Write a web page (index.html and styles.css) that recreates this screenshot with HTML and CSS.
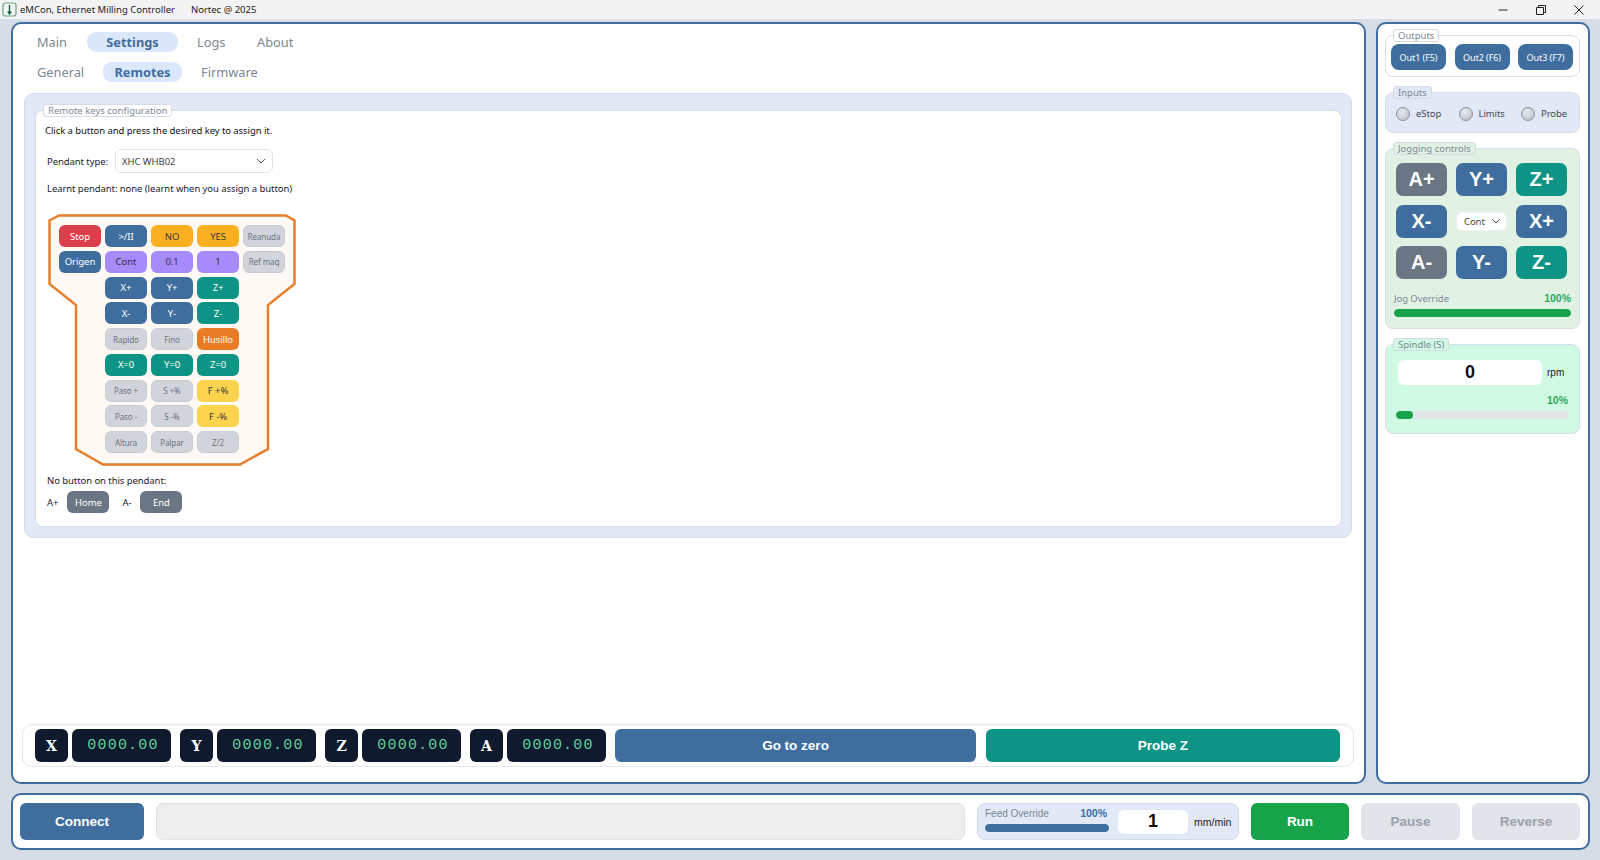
FILE: index.html
```html
<!DOCTYPE html>
<html lang="en">
<head>
  <meta charset="UTF-8" />
  <title>eMCon, Ethernet Milling Controller</title>
  <link rel="stylesheet" href="styles.css">
</head>
<body>
  <div class="titlebar">
    <svg class="app-icon" width="15" height="15" viewBox="0 0 15 15">
      <rect x="1" y="1" width="13" height="13" rx="2.5" fill="#f2f7f2" stroke="#6aa57c" stroke-width="1.2"/>
      <path d="M7.5 3v9M5.8 9.500l1.700 2.500 1.700-2.500" fill="none" stroke="#1f5f4a" stroke-width="1.4"/>
    </svg>
    <span class="app-name">eMCon, Ethernet Milling Controller</span>
    <span class="app-copy">Nortec @ 2025</span>
    <div class="win-controls">
      <svg width="12" height="12" viewBox="0 0 12 12"><path d="M1.500 6h9" stroke="#222" fill="none"/></svg>
      <svg width="12" height="12" viewBox="0 0 12 12"><path d="M3.500 3V1.500h7v7H9M1.500 3.500h7v7h-7z" stroke="#222" fill="none"/></svg>
      <svg width="12" height="12" viewBox="0 0 12 12"><path d="M1.500 1.500l9 9M10.500 1.500l-9 9" stroke="#222" fill="none"/></svg>
    </div>
  </div>

  <div class="workspace">
    <div class="main-panel">
      <div class="tabs tabs-top">
        <span class="tab tab-main">Main</span>
        <span class="tab tab-active tab-settings">Settings</span>
        <span class="tab tab-logs">Logs</span>
        <span class="tab">About</span>
      </div>
      <div class="tabs tabs-sub">
        <span class="tab tab-general">General</span>
        <span class="tab tab-active tab-remotes">Remotes</span>
        <span class="tab">Firmware</span>
      </div>

      <div class="settings-panel">
        <div class="group group-white remote-group">
          <div class="legend">Remote keys configuration</div>
          <div class="hint">Click a button and press the desired key to assign it.</div>
          <div class="pendant-type">
            <span>Pendant type:</span>
            <div class="select select-wide">
              <span>XHC WHB02</span>
              <svg width="10" height="6" viewBox="0 0 10 6"><path d="M1 1l4 4 4-4" fill="none" stroke="#555" stroke-width="1"/></svg>
            </div>
          </div>
          <div class="learnt">Learnt pendant: none (learnt when you assign a button)</div>

          <div class="pendant">
            <svg class="pendant-shape" width="248" height="252" viewBox="0 0 248 252">
              <path d="M1.500 6.500L11 1.500H238L246.500 6.500V70L220 91V235L192 250.500H55L28 235V91L1.500 70Z" fill="#fff9f5" stroke="#e67e2a" stroke-width="2.500"/>
            </svg>
            <div class="pad">
              <button class="key red">Stop</button>
              <button class="key blue">&gt;/II</button>
              <button class="key amber">NO</button>
              <button class="key amber">YES</button>
              <button class="key off">Reanuda</button>
              <button class="key blue">Origen</button>
              <button class="key purple">Cont</button>
              <button class="key purple">0.1</button>
              <button class="key purple">1</button>
              <button class="key off">Ref maq</button>
              <button class="key blue skip">X+</button>
              <button class="key blue">Y+</button>
              <button class="key teal">Z+</button>
              <button class="key blue skip">X-</button>
              <button class="key blue">Y-</button>
              <button class="key teal">Z-</button>
              <button class="key off skip">Rapido</button>
              <button class="key off">Fino</button>
              <button class="key orange">Husillo</button>
              <button class="key teal skip">X=0</button>
              <button class="key teal">Y=0</button>
              <button class="key teal">Z=0</button>
              <button class="key off skip">Paso +</button>
              <button class="key off">S +%</button>
              <button class="key yellow">F +%</button>
              <button class="key off skip">Paso -</button>
              <button class="key off">S -%</button>
              <button class="key yellow">F -%</button>
              <button class="key off skip">Altura</button>
              <button class="key off">Palpar</button>
              <button class="key off">Z/2</button>
            </div>
          </div>

          <div class="no-button">No button on this pendant:</div>
          <div class="extra-keys">
            <span>A+</span>
            <button class="key grey">Home</button>
            <span class="extra-minus">A-</span>
            <button class="key grey">End</button>
          </div>
        </div>
      </div>

      <div class="axis-bar">
        <div class="axis"><span class="axis-name">X</span><span class="axis-value">0000.00</span></div>
        <div class="axis"><span class="axis-name">Y</span><span class="axis-value">0000.00</span></div>
        <div class="axis"><span class="axis-name">Z</span><span class="axis-value">0000.00</span></div>
        <div class="axis"><span class="axis-name">A</span><span class="axis-value">0000.00</span></div>
        <button class="wide-btn blue zero-btn">Go to zero</button>
        <button class="wide-btn teal probe-btn">Probe Z</button>
      </div>
    </div>

    <div class="side-panel">
      <div class="group group-white outputs">
        <div class="legend">Outputs</div>
        <button class="out-btn">Out1 (F5)</button>
        <button class="out-btn">Out2 (F6)</button>
        <button class="out-btn">Out3 (F7)</button>
      </div>

      <div class="group group-blue inputs">
        <div class="legend">Inputs</div>
        <div class="input-item"><span class="led"></span>eStop</div>
        <div class="input-item"><span class="led"></span>Limits</div>
        <div class="input-item"><span class="led"></span>Probe</div>
      </div>

      <div class="group group-green jogging">
        <div class="legend">Jogging controls</div>
        <div class="jog-grid">
          <button class="jog grey">A+</button>
          <button class="jog blue">Y+</button>
          <button class="jog teal">Z+</button>
          <button class="jog blue">X-</button>
          <div class="select select-jog">
            <span>Cont</span>
            <svg width="10" height="6" viewBox="0 0 10 6"><path d="M1 1l4 4 4-4" fill="none" stroke="#555" stroke-width="1"/></svg>
          </div>
          <button class="jog blue">X+</button>
          <button class="jog grey">A-</button>
          <button class="jog blue">Y-</button>
          <button class="jog teal">Z-</button>
        </div>
        <div class="meter-head">
          <span class="meter-label">Jog Override</span>
          <span class="meter-pct">100%</span>
        </div>
        <div class="meter"><div class="meter-fill" style="width: 100%"></div></div>
      </div>

      <div class="group group-mint spindle">
        <div class="legend">Spindle (S)</div>
        <div class="spindle-row">
          <div class="number-box spindle-box">0</div>
          <span class="unit">rpm</span>
        </div>
        <div class="spindle-pct"><span class="meter-pct">10%</span></div>
        <div class="meter meter-spindle"><div class="meter-fill" style="width: 10%"></div></div>
      </div>
    </div>
  </div>

  <div class="bottom-panel">
    <button class="bottom-btn blue connect-btn">Connect</button>
    <div class="status-box"></div>
    <div class="feed-group">
      <div class="feed-meter">
        <div class="meter-head feed-head">
          <span class="meter-label">Feed Override</span>
          <span class="feed-pct">100%</span>
        </div>
        <div class="meter feed-bar"><div class="meter-fill feed-fill" style="width: 100%"></div></div>
      </div>
      <div class="number-box feed-box">1</div>
      <span class="unit">mm/min</span>
    </div>
    <button class="bottom-btn green run-btn">Run</button>
    <button class="bottom-btn disabled pause-btn">Pause</button>
    <button class="bottom-btn disabled reverse-btn">Reverse</button>
  </div>
</body>
</html>
```

FILE: styles.css
```css
* { box-sizing: border-box; }
html, body { height: 100%; }
body {
  margin: 0;
  width: 1600px;
  height: 860px;
  background: #d6dde6;
  color: #1b2230;
  font-family: "Noto Sans", "Open Sans", sans-serif;
  font-size: 9.500px;
  letter-spacing: -0.07px;
  overflow: hidden;
  display: flex;
  flex-direction: column;
}
button {
  font-family: inherit;
  letter-spacing: inherit;
  border: none;
  padding: 0;
  cursor: pointer;
}

/* title bar */
.titlebar {
  height: 19px;
  flex: none;
  background: #f3f3f3;
  display: flex;
  align-items: center;
  padding-left: 2px;
  font-size: 9.500px;
  letter-spacing: 0;
  color: #222;
}
.app-icon { margin-right: 3px; }
.app-copy { margin-left: 16px; }
.win-controls {
  margin-left: auto;
  display: flex;
  gap: 26px;
  padding-right: 15px;
}

/* panels */
.workspace {
  flex: none;
  height: 762px;
  margin: 3px 10px 0 11px;
  display: flex;
  gap: 10px;
}
.main-panel, .side-panel, .bottom-panel {
  background: #fff;
  border: 2px solid #3f6d9e;
  border-radius: 10px;
}
.main-panel {
  flex: none;
  width: 1355px;
  display: flex;
  flex-direction: column;
}
.side-panel {
  flex: 1;
  min-width: 0;
  padding: 11px 8px 0 7px;
}
.bottom-panel {
  height: 57px;
  margin: 9px 10px 0 11px;
  padding: 8px 8px 8px 7px;
  display: flex;
  align-items: stretch;
}

/* tabs */
.tabs {
  display: flex;
  align-items: center;
  height: 20px;
  font-size: 12.800px;
  letter-spacing: 0;
  color: #7b8794;
}
.tabs-top { margin: 8px 0 0 24px; }
.tabs-sub { margin: 10px 0 0 24px; }
.tab { white-space: nowrap; }
.tab-active {
  background: #dbe8fb;
  color: #3f6d9e;
  font-weight: 700;
  border-radius: 9px;
  height: 20px;
  line-height: 20px;
  text-align: center;
}
.tab-main { width: 50px; }
.tab-settings { width: 91px; }
.tab-logs { margin-left: 19px; width: 60px; }
.tab-general { width: 66px; }
.tab-remotes { width: 79px; }
.tab-remotes + .tab { margin-left: 19px; }

/* settings */
.settings-panel {
  margin: 11px 12px 0 11px;
  height: 445px;
  background: #e2e8f6;
  border: 1px solid #d2dbea;
  border-radius: 10px;
  padding: 16px 9px 10px 10px;
}
.group {
  position: relative;
  border: 1px solid #d8dee6;
  border-radius: 8px;
}
.group-white { background: #fff; }
.group-blue { background: #e2e8f6; }
.group-green { background: #e1f2e5; }
.group-mint { background: #d1fae5; }
.legend {
  position: absolute;
  top: -7px;
  left: 7px;
  height: 13px;
  line-height: 11px;
  padding: 0 4px;
  border: 1px solid #d5dbe4;
  border-radius: 3px;
  background: inherit;
  color: #7b8794;
  font-size: 9.500px;
  letter-spacing: 0;
  white-space: nowrap;
}
.remote-group {
  height: 100%;
  padding: 13px 10px 0 9px;
}
.hint { height: 14px; line-height: 14px; color: #111; }
.pendant-type {
  display: flex;
  align-items: center;
  gap: 7px;
  margin: 11px 0 0 2px;
}
.select {
  background: #fff;
  border: 1px solid #dfe3e8;
  display: flex;
  align-items: center;
  justify-content: space-between;
  color: #444;
}
.select-wide {
  width: 158px;
  height: 24px;
  border-radius: 6px;
  padding: 0 6px;
}
.select-jog {
  height: 19px;
  border-radius: 6px;
  padding: 0 5px 0 7px;
  align-self: center;
  border-color: #eef3ee;
}
.learnt { margin: 9px 0 0 2px; height: 14px; line-height: 14px; }

/* pendant */
.pendant {
  position: relative;
  width: 248px;
  height: 252px;
  margin: 18px 0 0 3px;
}
.pendant-shape { position: absolute; top: 0; left: 0; }
.pad {
  position: relative;
  display: grid;
  grid-template-columns: repeat(5, 42px);
  grid-auto-rows: 22px;
  column-gap: 4px;
  row-gap: 3.750px;
  padding: 11px 0 0 11px;
}
.key {
  border-radius: 6px;
  font-size: 9.500px;
  color: #fff;
  white-space: nowrap;
}
.skip { grid-column-start: 2; }
.red { background: #dc3f4b; }
.blue { background: #3f6d9e; color: #fff; }
.teal { background: #0d9484; color: #fff; }
.grey { background: #6b7684; color: #fff; }
.green { background: #16a34a; color: #fff; }
.amber { background: #fbb024; color: #3a3a3a; }
.purple { background: #a78bfa; color: #333; }
.yellow { background: #fcd34d; color: #3a3a3a; }
.orange { background: #e97b24; color: #fff; }
.off {
  background: #d1d5db;
  border: 1px solid #c9ced5;
  color: #6b7280;
  font-size: 8px;
}
.no-button { margin: 8px 0 0 2px; height: 14px; line-height: 14px; }
.extra-keys {
  display: flex;
  align-items: center;
  margin: 3px 0 0 2px;
  height: 22px;
}
.extra-keys .key { width: 42px; height: 22px; margin-left: 9px; }
.extra-minus { margin-left: 13px; }
.extra-keys .key:last-child { margin-left: 9px; }

/* axis bar */
.axis-bar {
  margin: auto 10px 15px 9px;
  height: 43px;
  border: 1px solid #e3e6ea;
  border-radius: 10px;
  display: flex;
  align-items: center;
  padding-left: 12px;
}
.axis { display: flex; gap: 4px; margin-right: 9px; }
.axis-name, .axis-value {
  background: #0f1a2e;
  color: #fff;
  height: 33px;
  border-radius: 6px;
  display: flex;
  align-items: center;
  justify-content: center;
}
.axis-name {
  width: 33px;
  font-family: "DejaVu Serif", serif;
  font-size: 14px;
  font-weight: 700;
}
.axis-value {
  width: 99px;
  padding-left: 3px;
  font-family: "Liberation Mono", monospace;
  font-size: 15px;
  letter-spacing: 1.200px;
  color: #5fd39a;
}
.wide-btn {
  height: 33px;
  border-radius: 6px;
  font-family: "Liberation Sans", sans-serif;
  font-size: 13.500px;
  font-weight: 700;
  letter-spacing: 0;
}
.zero-btn { width: 361px; }
.probe-btn { width: 354px; margin-left: 10px; }

/* side panel */
.group + .group { margin-top: 15px; }
.outputs {
  height: 42px;
  display: flex;
  justify-content: space-between;
  align-items: center;
  padding: 2px 6px 0 5px;
}
.out-btn {
  width: 55px;
  height: 26px;
  border-radius: 8px;
  background: #3f6d9e;
  color: #fff;
  font-size: 9px;
}
.inputs {
  height: 41px;
  display: flex;
  align-items: center;
  padding: 2px 0 0 10px;
  color: #3f4a58;
}
.input-item {
  flex: none;
  width: 62.500px;
  display: flex;
  align-items: center;
  gap: 6px;
  white-space: nowrap;
}
.led {
  width: 14px;
  height: 14px;
  border-radius: 50%;
  border: 1px solid #8b93a0;
  background: radial-gradient(circle at 40% 35%, #e8ebef, #b4bac4);
}
.jogging {
  height: 181px;
  padding: 14px 8px 0 8px;
}
.jog-grid {
  display: grid;
  grid-template-columns: repeat(3, 51px);
  grid-auto-rows: 33px;
  column-gap: 9px;
  row-gap: 8.500px;
  margin-left: 2px;
}
.jog {
  border-radius: 7px;
  font-family: "Liberation Sans", sans-serif;
  font-size: 20px;
  font-weight: 700;
  letter-spacing: 0;
}
.meter-head {
  display: flex;
  justify-content: space-between;
  align-items: center;
  height: 14px;
  margin-top: 12px;
}
.meter-label {
  color: #7b8794;
}
.meter-pct {
  font-family: "Liberation Sans", sans-serif;
  font-size: 10.500px;
  font-weight: 700;
  letter-spacing: 0;
  color: #2fa85a;
}
.meter {
  height: 8px;
  border-radius: 4px;
  background: #e2e5ea;
  margin-top: 4px;
  overflow: hidden;
}
.meter-fill {
  height: 100%;
  border-radius: 4px;
  background: #16a34a;
}
.spindle {
  height: 90px;
  padding: 15px 10px 0 10px;
}
.spindle-row {
  display: flex;
  align-items: center;
  gap: 5px;
  padding-left: 2px;
}
.number-box {
  background: #fff;
  border-radius: 6px;
  font-family: "Liberation Sans", sans-serif;
  font-weight: 700;
  display: flex;
  align-items: center;
  justify-content: center;
  color: #111;
}
.spindle-box {
  width: 144px;
  height: 25px;
  font-size: 18px;
}
.unit {
  font-family: "Liberation Sans", sans-serif;
  font-size: 10px;
  letter-spacing: 0;
  color: #222;
}
.spindle-pct {
  text-align: right;
  margin-top: 9px;
  padding-right: 1px;
  height: 14px;
}
.meter-spindle { margin-top: 3px; }

/* bottom bar */
.bottom-btn {
  flex: none;
  border-radius: 6px;
  font-family: "Liberation Sans", sans-serif;
  font-size: 13.500px;
  font-weight: 700;
  letter-spacing: 0;
}
.connect-btn { width: 124px; }
.status-box {
  flex: none;
  width: 809px;
  margin-left: 12px;
  background: #eeeeee;
  border: 1px solid #dfe1e4;
  border-radius: 7px;
}
.feed-group {
  flex: none;
  width: 262px;
  margin-left: 12px;
  background: #e2e8f6;
  border: 1px solid #d2dbea;
  border-radius: 8px;
  display: flex;
  align-items: center;
  padding: 0 0 0 7px;
}
.feed-meter { width: 124px; margin-top: -5px; }
.feed-head { margin-top: 0; height: 13px; padding-right: 2px; }
.feed-group .meter-label {
  font-family: "Liberation Sans", sans-serif;
  font-size: 10px;
  letter-spacing: 0;
}
.feed-pct {
  font-family: "Liberation Sans", sans-serif;
  font-size: 10.500px;
  font-weight: 700;
  letter-spacing: 0;
  color: #3f6d9e;
}
.feed-bar { margin-top: 4px; }
.feed-fill { background: #3f6d9e; }
.feed-box {
  width: 70px;
  height: 24px;
  margin-left: 9px;
  font-size: 18px;
}
.feed-group .unit { margin-left: 6px; font-size: 10.500px; }
.run-btn { width: 98px; margin-left: 12px; }
.disabled { background: #e1e4e8; color: #9aa1ab; }
.pause-btn { width: 99px; margin-left: 12px; }
.reverse-btn { width: 108px; margin-left: 12px; }
```
